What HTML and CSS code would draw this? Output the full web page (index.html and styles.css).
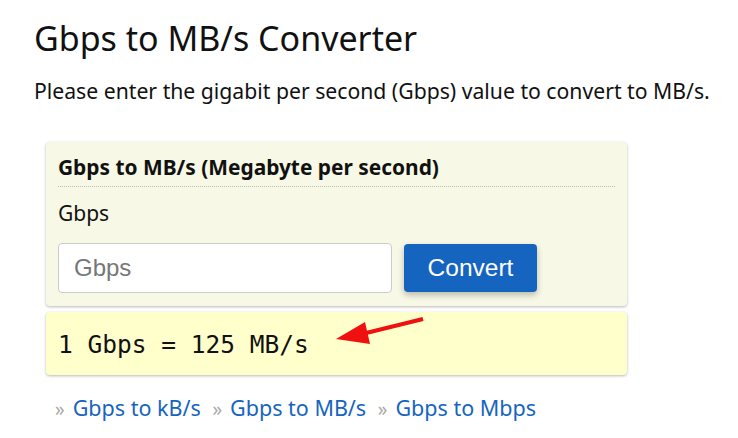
FILE: index.html
```html
<!DOCTYPE html>
<html>
<head>
<meta charset="utf-8">
<link rel="stylesheet" href="styles.css">
</head>
<body>
<div class="page">
  <h1 class="title">Gbps to MB/s Converter</h1>
  <p class="intro">Please enter the gigabit per second (Gbps) value to convert to MB/s.</p>
  <div class="wrap">
    <div class="card form-card">
      <div class="card-title">Gbps to MB/s (Megabyte per second)</div>
      <label class="field-label">Gbps</label>
      <div class="row">
        <input class="input" type="text" placeholder="Gbps">
        <button class="btn">Convert</button>
      </div>
    </div>
    <div class="card result-card">
      <span class="result">1 Gbps = 125 MB/s</span>
      <svg class="arrow" width="110" height="40" viewBox="0 0 110 40">
        <line x1="97" y1="7" x2="36" y2="22" stroke="#f01010" stroke-width="4"/>
        <polygon points="10,27 39,10 44,32" fill="#f01010"/>
      </svg>
    </div>
    <div class="links">
      <span class="raquo">»</span><a href="#">Gbps to kB/s</a>
      <span class="raquo">»</span><a href="#">Gbps to MB/s</a>
      <span class="raquo">»</span><a href="#">Gbps to Mbps</a>
    </div>
  </div>
</div>
</body>
</html>
```

FILE: styles.css
```css
html, body {
  margin: 0;
  padding: 0;
  background: #fff;
}
body {
  font-family: "Noto Sans", "Open Sans", sans-serif;
  color: #111;
}
.page {
  padding: 14px 0 0 34px;
}
.title {
  font-size: 34px;
  font-weight: 400;
  margin: 0;
  line-height: 48px;
  white-space: nowrap;
}
.intro {
  font-size: 21.2px;
  margin: 15px 0 0 0;
  line-height: 28px;
  white-space: nowrap;
}
.wrap {
  margin: 37px 0 0 12px;
  width: 581px;
}
.card {
  border-radius: 4px;
  box-shadow: 0 1px 3px rgba(0,0,0,0.28);
  box-sizing: border-box;
}
.form-card {
  background: #f8f8e6;
  padding: 10px 12px 12px 12px;
  height: 164px;
}
.card-title {
  font-size: 20.9px;
  font-weight: 700;
  line-height: 30px;
  padding-bottom: 4px;
  border-bottom: 1px dotted #bbb;
}
.field-label {
  display: block;
  font-size: 21px;
  margin-top: 12px;
  line-height: 28px;
}
.row {
  display: flex;
  gap: 12px;
  margin-top: 16px;
}
.input {
  width: 334px;
  height: 50px;
  box-sizing: border-box;
  border: 1px solid #ccc;
  border-radius: 4px;
  padding: 0 15px;
  font-family: "Liberation Sans", Arial, sans-serif;
  font-size: 24px;
  background: #fff;
  outline: none;
}
.input::placeholder {
  color: #777;
}
.btn {
  width: 133px;
  height: 48px;
  margin-top: 1px;
  background: #1565c0;
  color: #fff;
  border: none;
  border-radius: 4px;
  font-family: "Liberation Sans", Arial, sans-serif;
  font-size: 24.5px;
  padding: 0;
  box-shadow: 0 3px 6px rgba(0,0,0,0.25);
}
.result-card {
  position: relative;
  background: #ffffcc;
  margin-top: 6px;
  height: 63px;
  padding: 0 12px;
  display: flex;
  align-items: center;
}
.result {
  font-family: "DejaVu Sans Mono", "Liberation Mono", monospace;
  font-size: 24.5px;
  color: #111;
  margin-top: 2px;
}
.arrow {
  position: absolute;
  left: 280px;
  top: 0;
}
.links {
  margin-top: 19px;
  padding-left: 9px;
  font-size: 21.5px;
  line-height: 28px;
  white-space: nowrap;
}
.links a {
  color: #1565c0;
  text-decoration: none;
  margin-right: 6px;
}
.raquo {
  color: #aaa;
  font-size: 19px;
  margin-right: 8px;
}
```
